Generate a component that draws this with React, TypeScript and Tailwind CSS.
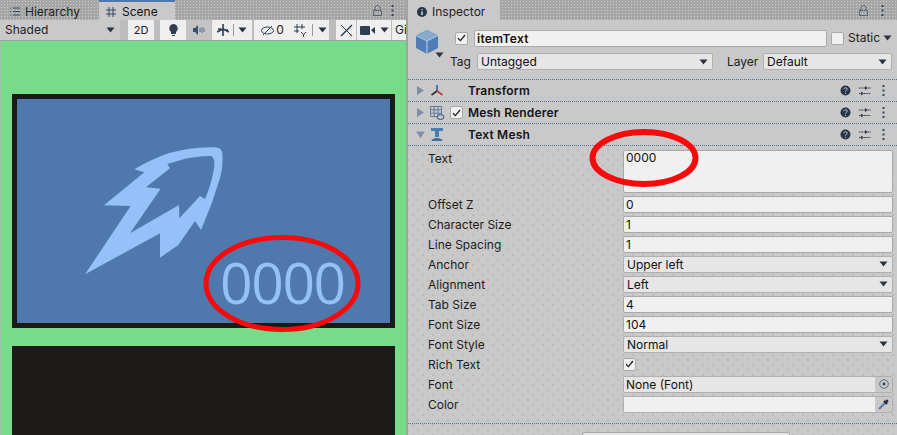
import React from "react";

const dense = "bg-[#a6a6a6] bg-[radial-gradient(#cfcfcf_0.6px,transparent_0.9px)] bg-[length:3px_3px]";
const sparse = "bg-[#c9c9c9] bg-[radial-gradient(#a4a4a4_0.55px,transparent_0.8px),radial-gradient(#a4a4a4_0.55px,transparent_0.8px)] bg-[length:10px_10px] bg-[position:0_0,5px_5px]";
const dither = "bg-[#e6e6e6] bg-[radial-gradient(#cdcdcd_0.5px,transparent_0.7px)] bg-[length:2px_2px]";

const Caret = ({ c = "" }: { c?: string }) => (
  <svg width="9" height="6" viewBox="0 0 9 6" className={c}><path d="M0.5 0.5H8.5L4.5 5.5Z" fill="#2c3440" /></svg>
);

const Check = () => (
  <svg width="9" height="8" viewBox="0 0 9 8"><path d="M1 4.2 3.4 6.6 8 1" fill="none" stroke="#222" strokeWidth="1.3" /></svg>
);

const Lock = () => (
  <svg width="9" height="11" viewBox="0 0 9 11"><path d="M2 5V3a2.5 2.5 0 0 1 5 0v2" fill="none" stroke="#3f4a5a" strokeDasharray="1.5 .6" /><rect x="0.5" y="5.5" width="8" height="5" fill="none" stroke="#3f4a5a" strokeDasharray="1.5 .6" /></svg>
);

const Dots = () => (
  <svg width="3" height="11" viewBox="0 0 3 11"><rect x="0.5" y="0" width="2" height="2" fill="#3a4656" /><rect x="0.5" y="4.5" width="2" height="2" fill="#3a4656" /><rect x="0.5" y="9" width="2" height="2" fill="#3a4656" /></svg>
);

const Help = () => (
  <svg width="11" height="11" viewBox="0 0 11 11"><circle cx="5.5" cy="5.5" r="5" fill="#28364a" /><path d="M3.8 4.2c.2-2 3.4-1.8 3.4 0 0 1.2-1.7 1.2-1.7 2.4M5.5 7.8v1" stroke="#c9d3df" fill="none" /></svg>
);

const Sliders = () => (
  <svg width="12" height="10" viewBox="0 0 12 10"><path d="M0 2h6M9 2h3M0 7.5h2M5 7.5h7" stroke="#333c48" strokeDasharray="1.6 .7" /><path d="M6 0l3 2-3 2zM2 5.5l3 2-3 2z" fill="#333c48" /></svg>
);

const Arrow = ({ open }: { open?: boolean }) => (
  <svg width="9" height="9" viewBox="0 0 9 9">
    {open ? <path d="M0 1.5H9L4.5 8Z" fill="#7d8ea3" /> : <path d="M1 0V9L8 4.5Z" fill="#7d8ea3" />}
  </svg>
);

const Cube = () => (
  <svg width="24" height="26" viewBox="0 0 24 26">
    <path d="M12 1 23 6.5V19L12 25 1 19V6.5Z" fill="#4f7db4" />
    <path d="M12 1 23 6.5 12 12 1 6.5Z" fill="#86a9cf" />
    <path d="M12 12V25" stroke="#c2d4e6" strokeWidth="1" />
    <path d="M1 6.5 12 12 23 6.5" stroke="#c2d4e6" strokeWidth="0.8" fill="none" />
  </svg>
);

const TransformIcon = () => (
  <svg width="14" height="13" viewBox="0 0 14 13">
    <path d="M7 1V7" stroke="#2d5f9e" strokeWidth="1.6" />
    <path d="M7 7 1.5 11" stroke="#2b2f36" strokeWidth="1.6" />
    <path d="M7 7 12.5 11" stroke="#c8342c" strokeWidth="1.6" />
  </svg>
);

const MeshIcon = () => (
  <svg width="15" height="14" viewBox="0 0 15 14" fill="none">
    <path d="M.5.5h11v10h-11zM4.2.5v10M8 .5v10M.5 3.8h11M.5 7.2h11" stroke="#55769b" strokeWidth="0.9" />
    <ellipse cx="10.5" cy="11" rx="3.5" ry="2.4" fill="#c9c9c9" stroke="#2e4f78" />
  </svg>
);

const TextIcon = () => (
  <svg width="14" height="15" viewBox="0 0 14 15">
    <path d="M1 1h12v3H9v6H5V4H1z" fill="#4a7cb0" />
    <path d="M1.5 14c0-4 11-4 11 0z" fill="#3f6c9c" />
  </svg>
);

const Rocket = () => (
  <svg width="180" height="150" viewBox="0 0 540 450" className="absolute left-[43px] top-[31px]">
    <path
      fillRule="evenodd"
      fill="#94c1f7"
      d="M75 433 212 228 132 226 253 127 223 118Q270 90 325 70 395 50 465 52 485 52 487 70 490 115 478 150 465 190 457 215L423 300 405 273 355 345 300 383 300 310ZM322 102 330 115 258 172 302 176 210 310 357 225 358 265 420 198 435 207Q455 160 463 110L463 90 455 78Q400 78 355 92Z"
    />
  </svg>
);

const Btn = ({ w, active, children, cls = "" }: { w: string; active?: boolean; children?: React.ReactNode; cls?: string }) => (
  <div className={`${w} h-full flex items-center justify-center ${active ? "bg-[#c4c4c4]" : "bg-[#efefef]"} ${cls}`}>{children}</div>
);

const Row = ({ label, children }: { label: string; children: React.ReactNode }) => (
  <div className="h-5 flex items-center">
    <div className="w-[215px] pl-[20px] pt-[2px] text-[12px] text-[#1c1c1c]">{label}</div>
    <div className="w-[270px] h-full flex items-center">{children}</div>
  </div>
);

const Field = ({ v }: { v: string }) => (
  <div className="w-full h-[17px] bg-[#f0f0f0] border border-[#a9a9a9] rounded-[2px] pl-[2px] text-[12px] leading-[15px] text-[#111]">{v}</div>
);

const Drop = ({ v }: { v: string }) => (
  <div className={`w-full h-[17px] ${dither} border border-[#b0b0b0] rounded-[2px] pl-[3px] pr-[4px] text-[12px] leading-[15px] text-[#111] flex items-center justify-between`}>
    <span>{v}</span>
    <Caret />
  </div>
);

const CheckBox = ({ on }: { on?: boolean }) => (
  <div className="w-[13px] h-[13px] bg-[#f0f0f0] border border-[#a9a9a9] rounded-[2px] flex items-center justify-center shrink-0">{on && <Check />}</div>
);

const CompHeader = ({ icon, name, arrow, check }: { icon: React.ReactNode; name: string; arrow?: boolean; check?: boolean }) => (
  <div className="h-[22px] flex items-center pl-[8px] pr-[12px] border-b border-dotted border-[#56708f]">
    <div className="w-[13px] flex"><Arrow open={arrow} /></div>
    <div className="w-[16px] flex justify-center">{icon}</div>
    <div className="w-[25px] pl-[5px] flex">{check && <CheckBox on />}</div>
    <div className="flex-1 -ml-[2px] text-[12px] font-semibold text-[#141414] tracking-[0.2px]">{name}</div>
    <div className="flex items-center -ml-[1px]"><Help /><div className="w-[8px]" /><Sliders /><div className="w-[11px]" /><Dots /></div>
  </div>
);

export default function App() {
  return (
    <div className="relative w-[897px] h-[435px] overflow-hidden flex bg-[#c9c9c9] [font-family:Inter,'Liberation_Sans',sans-serif]">
      {/* Scene side */}
      <div className="w-[406px] h-full flex flex-col">
        <div className={`h-5 shrink-0 flex ${dense}`}>
          <div className="w-[99px] h-full flex items-center pl-[10px] pt-[3px] gap-[5px] text-[12px] text-[#222]">
            <svg width="10" height="9" viewBox="0 0 10 9"><path d="M0 1h1M3 1h7M0 4.5h1M3 4.5h7M0 8h1M3 8h7" stroke="#39485a" /></svg>
            Hierarchy
          </div>
          <div className="w-[76px] h-full bg-[#c9c9c9] border-t-2 border-[#4f79ad] flex items-center pl-[7px] pt-[1px] gap-[6px] text-[12px] text-[#111]">
            <svg width="10" height="10" viewBox="0 0 10 10"><path d="M3 0v10M7 0v10M0 3h10M0 7h10" stroke="#34465c" /></svg>
            Scene
          </div>
          <div className="flex-1 flex items-center justify-end gap-[9px] pr-[12px]"><Lock /><Dots /></div>
        </div>
        <div className="h-[21px] shrink-0 flex items-stretch bg-[#bdbdbd] border-b border-[#a2a2a2] text-[12px] text-[#222]">
          <div className="w-[120px] bg-[#c9c9c9] flex items-center justify-between pl-[5px] pr-[5px]">Shaded<Caret /></div>
          <div className="w-[8px]" />
          <Btn w="w-[26px]" cls="text-[11px]">2D</Btn>
          <div className="w-[6px]" />
          <Btn w="w-[26px]">
            <svg width="9" height="12" viewBox="0 0 9 12"><path d="M4.5 0a4.5 4.5 0 0 1 2.5 8v2H2V8A4.5 4.5 0 0 1 4.5 0z" fill="#2e3d52" /><rect x="3" y="11" width="3" height="1" fill="#2e3d52" /></svg>
          </Btn>
          <Btn w="w-[25px]" active>
            <svg width="12" height="10" viewBox="0 0 12 10"><path d="M0 3h2l3-3v10L2 7H0z" fill="#38506e" /><path d="M7 3v4M9 2v6M11 3v4" stroke="#556d8c" /></svg>
          </Btn>
          <div className="w-px" />
          <Btn w="w-[40px]" cls="gap-[4px]">
            <svg width="12" height="12" viewBox="0 0 12 12"><path d="M6 0v12M0 8l6-3 6 3M1 5h3M8 6h3" stroke="#2c3d52" strokeWidth="1.6" fill="none" /></svg>
            <div className="w-px h-[12px] bg-[#9a9a9a]" />
            <Caret />
          </Btn>
          <div className="w-[2px]" />
          <Btn w="w-[37px]" cls="gap-[2px]">
            <svg width="13" height="11" viewBox="0 0 13 11" fill="none"><ellipse cx="6.5" cy="5.5" rx="6" ry="3.5" stroke="#2c3d52" /><path d="M2 10 11 1" stroke="#2c3d52" /></svg>
            0
          </Btn>
          <div className="w-[38px] bg-[#efefef] ml-0 flex items-center justify-center gap-[5px]">
            <svg width="13" height="13" viewBox="0 0 13 13" fill="none"><path d="M3 0v9M8 0v5M0 3h11M0 7h5" stroke="#2c3d52" /><path d="M7 8l2.5 2.5L12 8M9.5 10.5V13" stroke="#2c3d52" /></svg>
            <div className="w-px h-[12px] bg-[#9a9a9a]" />
            <Caret />
          </div>
          <div className="w-[7px]" />
          <Btn w="w-[20px]">
            <svg width="13" height="13" viewBox="0 0 13 13" fill="none"><path d="M1 12 12 1" stroke="#2c3d52" strokeWidth="1.5" /><path d="M1 1l11 11" stroke="#2c3d52" /><path d="M10 10l2 2" stroke="#c8342c" strokeWidth="1.5" /></svg>
          </Btn>
          <div className="w-px" />
          <Btn w="w-[34px]" cls="gap-[5px]">
            <svg width="15" height="9" viewBox="0 0 15 9"><rect width="10" height="9" rx="1" fill="#2e3d52" /><path d="M11 4l4-3v7z" fill="#2e3d52" /></svg>
            <Caret />
          </Btn>
          <div className="w-px" />
          <div className="flex-1 bg-[#efefef] pl-[3px] flex items-center overflow-hidden">Gi</div>
        </div>
        <div className="flex-1 min-h-0 bg-[#76dc8a] pt-[53px] pl-[12px] pr-[11px] flex flex-col gap-[18px] border-l border-[#a8b8a8]">
          <div className="relative h-[234px] w-[383px] -ml-px border-[5px] border-[#1c1a18] bg-[#4f79ad] shrink-0">
            <Rocket />
            <div className="absolute left-[203px] top-[155px] text-[57px] leading-[57px] text-[#94c1f7] [font-family:'Open_Sans',sans-serif] font-normal tracking-[-1.4px]">0000</div>
          </div>
          <div className="flex-1 w-[383px] -ml-px bg-[#1c1a18]" />
        </div>
      </div>
      <div className="w-[2px] h-full bg-[#a3a3a3]" />
      {/* Inspector */}
      <div className={`flex-1 h-full flex flex-col overflow-hidden ${sparse}`}>
        <div className={`h-5 shrink-0 flex ${dense}`}>
          <div className="w-[92px] h-full bg-[#c9c9c9] flex items-center pl-[9px] pt-[3px] gap-[5px] text-[12px] text-[#222]">
            <svg width="10" height="10" viewBox="0 0 10 10"><circle cx="5" cy="5" r="5" fill="#28364a" /><path d="M5 2.2v1M5 4.5v3.5" stroke="#dfe6ee" strokeWidth="1.4" /></svg>
            Inspector
          </div>
          <div className="flex-1 flex items-center justify-end gap-[13px] pr-[13px]"><Lock /><Dots /></div>
        </div>
        <div className="h-[60px] shrink-0 bg-[#c9c9c9] border-b border-dotted border-[#56708f] flex">
          <div className="w-[47px] pl-[7px] pt-[9px] relative">
            <Cube />
            <div className="absolute left-[27px] top-[32px]"><Caret /></div>
          </div>
          <div className="flex-1 flex flex-col pt-[10px] gap-[7px]">
            <div className="flex items-center h-[16px]">
              <CheckBox on />
              <div className="ml-[6px] w-[353px] h-[17px] bg-[#f0f0f0] border border-[#a9a9a9] rounded-[2px] pl-[2px] text-[12px] leading-[15px] font-semibold tracking-[0.3px] text-[#111]">itemText</div>
              <div className="ml-[4px]"><CheckBox /></div>
              <span className="ml-[4px] text-[12px] text-[#222]">Static</span>
              <Caret c="ml-[3px]" />
            </div>
            <div className="flex items-center h-[17px]">
              <span className="-ml-[5px] w-[27px] text-[12px] text-[#222]">Tag</span>
              <div className="w-[236px]"><Drop v="Untagged" /></div>
              <span className="ml-[14px] w-[36px] text-[12px] text-[#222]">Layer</span>
              <div className="w-[129px]"><Drop v="Default" /></div>
            </div>
          </div>
        </div>
        <div className="shrink-0 bg-[#c9c9c9]">
          <CompHeader icon={<TransformIcon />} name="Transform" />
          <CompHeader icon={<MeshIcon />} name="Mesh Renderer" check />
          <CompHeader icon={<TextIcon />} name="Text Mesh" arrow />
        </div>
        <div className="pt-[4px] shrink-0">
          <div className="h-[44px] flex">
            <div className="w-[215px] pl-[20px] pt-[1px] text-[12px] leading-[15px] text-[#1c1c1c]">Text</div>
            <div className="w-[270px] h-[43px] bg-[#f0f0f0] border border-[#a9a9a9] rounded-[2px] pl-[2px] text-[12px] leading-[14px] text-[#111]">0000</div>
          </div>
          <Row label="Offset Z"><Field v="0" /></Row>
          <Row label="Character Size"><Field v="1" /></Row>
          <Row label="Line Spacing"><Field v="1" /></Row>
          <Row label="Anchor"><Drop v="Upper left" /></Row>
          <Row label="Alignment"><Drop v="Left" /></Row>
          <Row label="Tab Size"><Field v="4" /></Row>
          <Row label="Font Size"><Field v="104" /></Row>
          <Row label="Font Style"><Drop v="Normal" /></Row>
          <Row label="Rich Text"><CheckBox on /></Row>
          <Row label="Font">
            <div className="w-full h-[17px] flex border border-[#b0b0b0] rounded-[2px]">
              <div className={`flex-1 ${dither} pl-[2px] text-[12px] leading-[15px] text-[#111]`}>None (Font)</div>
              <div className="w-[17px] bg-[#c9c9c9] flex items-center justify-center">
                <svg width="10" height="10" viewBox="0 0 10 10"><circle cx="5" cy="5" r="4.3" fill="none" stroke="#5d6a7a" /><circle cx="5" cy="5" r="1.4" fill="#2e3d52" /></svg>
              </div>
            </div>
          </Row>
          <Row label="Color">
            <div className="w-full h-[17px] flex border border-[#b0b0b0] rounded-[2px]">
              <div className="flex-1 bg-[#f0f0f0]" />
              <div className="w-[17px] bg-[#c9c9c9] flex items-center justify-center">
                <svg width="11" height="11" viewBox="0 0 11 11"><path d="M1 10 7 4" stroke="#4f79ad" strokeWidth="2" /><path d="M6 2l3 3M8 1l2 2" stroke="#1f2a38" strokeWidth="2" /></svg>
              </div>
            </div>
          </Row>
          <div className="h-[9px]" />
          <div className="border-t border-dotted border-[#56708f]" />
          <div className="ml-[174px] mt-[8px] w-[208px] h-[10px] bg-[#e6e6e6] border border-[#a9a9a9] rounded-[2px]" />
        </div>
      </div>
      {/* Red markup */}
      <svg className="absolute left-0 top-0 pointer-events-none" width="897" height="435">
        <ellipse cx="282" cy="283.5" rx="76" ry="46" fill="none" stroke="#f80a0a" strokeWidth="5" />
        <ellipse cx="644" cy="158" rx="51.5" ry="26" fill="none" stroke="#f80a0a" strokeWidth="6" />
      </svg>
    </div>
  );
}
